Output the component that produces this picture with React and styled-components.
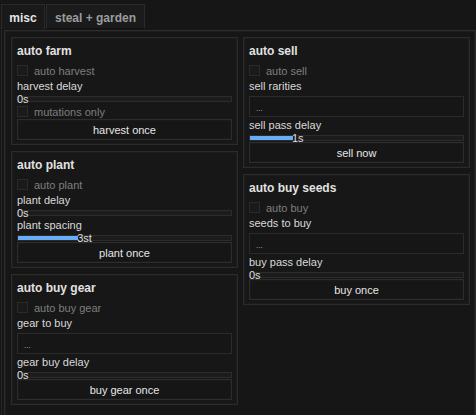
import React from 'react'
import styled, { createGlobalStyle } from 'styled-components'

const GlobalStyle = createGlobalStyle`
    html, body {
        margin: 0;
        padding: 0;
        background: #161616;
        overflow: hidden;
    }
    body {
        font-family: 'Liberation Sans', Arial, sans-serif;
        font-size: 11px;
        color: #dcdcdc;
    }
`

const Window = styled.div`
    margin: 4px 0 0 1px;
    height: 420px;
    border-left: 1px solid #262626;
`

const TabRow = styled.div`
    display: flex;
    gap: 1px;
    height: 25px;
    margin-left: -1px;
`

const Tab = styled.div`
    box-sizing: border-box;
    width: ${p => p.$width}px;
    height: 25px;
    padding-top: 6px;
    text-align: center;
    font-size: 12px;
    line-height: 14px;
    font-weight: bold;
    color: ${p => (p.$active ? '#e4e4e4' : '#9c9c9c')};
    background: ${p => (p.$active ? '#191919' : '#1b1b1b')};
    border: 1px solid #2a2a2a;
    border-bottom: ${p => (p.$active ? 'none' : '1px solid #0f0f0f')};
`

const Frame = styled.div`
    margin: 1px 0 0 2px;
    width: 472px;
    height: 400px;
    box-sizing: border-box;
    border: 1px solid #2c2c2c;
    box-shadow: inset 0 0 0 1px #1d1d1d;
    padding: 6px 5px 0 6px;
`

const Columns = styled.div`
    display: grid;
    grid-template-columns: 1fr 1fr;
    gap: 5px;
    align-items: start;
`

const Column = styled.div`
    display: flex;
    flex-direction: column;
    gap: 6px;
`

const Panel = styled.section`
    display: flex;
    flex-direction: column;
    padding: 6px 5px 4px;
    background: #171717;
    border: 1px solid #2b2b2b;
    box-shadow: inset 0 0 0 1px #1c1c1c;
`

const PanelTitle = styled.div`
    font-size: 12px;
    line-height: 14px;
    font-weight: bold;
    color: #e2e2e2;
    margin-bottom: 4px;
`

const ToggleRow = styled.div`
    display: flex;
    align-items: center;
    height: 16px;
`

const Box = styled.span`
    box-sizing: border-box;
    width: 11px;
    height: 11px;
    margin-right: 6px;
    background: #1a1a1a;
    border: 1px solid #2a2a2a;
`

const ToggleText = styled.span`
    color: #7e7e7e;
    line-height: 16px;
    padding-top: 2px;
`

const FieldLabel = styled.div`
    margin-top: 1px;
    line-height: 14px;
    color: #dadada;
`

const Slider = styled.div`
    position: relative;
    height: 10px;
`

const Track = styled.div`
    box-sizing: border-box;
    margin-top: 3px;
    height: 6px;
    background: #1c1c1c;
    border: 1px solid #2c2c2c;
`

const Fill = styled.div`
    height: 100%;
    background: #68aef6;
`

const SliderValue = styled.span`
    position: absolute;
    top: 1px;
    line-height: 11px;
    color: #dedede;
`

const Dropdown = styled.div`
    box-sizing: border-box;
    display: flex;
    align-items: center;
    margin-top: 3px;
    height: 21px;
    padding: 4px 0 0 6px;
    font-size: 8px;
    color: #bcbcbc;
    background: #161616;
    border: 1px solid #2b2b2b;
`

const ActionButton = styled.button`
    position: relative;
    box-sizing: border-box;
    height: 21px;
    padding: 1px 0 0;
    font-family: inherit;
    font-size: 11px;
    color: #e6e6e6;
    background: #161616;
    border: 1px solid #2d2d2d;
    box-shadow: inset 0 0 0 1px #1a1a1a;
`

const panels = {
    left: [
        {
            title: 'auto farm',
            items: [
                { type: 'toggle', text: 'auto harvest' },
                { type: 'label', text: 'harvest delay' },
                { type: 'slider', value: 0, text: '0s' },
                { type: 'toggle', text: 'mutations only' },
                { type: 'button', text: 'harvest once' },
            ],
        },
        {
            title: 'auto plant',
            items: [
                { type: 'toggle', text: 'auto plant' },
                { type: 'label', text: 'plant delay' },
                { type: 'slider', value: 0, text: '0s' },
                { type: 'label', text: 'plant spacing' },
                { type: 'slider', value: 28, text: '3st' },
                { type: 'button', text: 'plant once' },
            ],
        },
        {
            title: 'auto buy gear',
            items: [
                { type: 'toggle', text: 'auto buy gear' },
                { type: 'label', text: 'gear to buy' },
                { type: 'dropdown' },
                { type: 'label', text: 'gear buy delay' },
                { type: 'slider', value: 0, text: '0s' },
                { type: 'button', text: 'buy gear once' },
            ],
        },
    ],
    right: [
        {
            title: 'auto sell',
            items: [
                { type: 'toggle', text: 'auto sell' },
                { type: 'label', text: 'sell rarities' },
                { type: 'dropdown' },
                { type: 'label', text: 'sell pass delay' },
                { type: 'slider', value: 20, text: '1s' },
                { type: 'button', text: 'sell now' },
            ],
        },
        {
            title: 'auto buy seeds',
            items: [
                { type: 'toggle', text: 'auto buy' },
                { type: 'label', text: 'seeds to buy' },
                { type: 'dropdown' },
                { type: 'label', text: 'buy pass delay' },
                { type: 'slider', value: 0, text: '0s' },
                { type: 'button', text: 'buy once' },
            ],
        },
    ],
}

const renderItem = (item, i) => {
    switch (item.type) {
        case 'toggle':
            return (
                <ToggleRow key={i}>
                    <Box />
                    <ToggleText>{item.text}</ToggleText>
                </ToggleRow>
            )
        case 'label':
            return <FieldLabel key={i}>{item.text}</FieldLabel>
        case 'slider':
            return (
                <Slider key={i}>
                    <Track>
                        <Fill style={{ width: `${item.value}%` }} />
                    </Track>
                    <SliderValue style={{ left: `${item.value}%` }}>
                        {item.text}
                    </SliderValue>
                </Slider>
            )
        case 'dropdown':
            return <Dropdown key={i}>...</Dropdown>
        default:
            return <ActionButton key={i}>{item.text}</ActionButton>
    }
}

const renderPanel = panel => (
    <Panel key={panel.title}>
        <PanelTitle>{panel.title}</PanelTitle>
        {panel.items.map(renderItem)}
    </Panel>
)

export default function App() {
    return (
        <>
            <GlobalStyle />
            <Window>
                <TabRow>
                    <Tab $active $width={44}>misc</Tab>
                    <Tab $width={99}>steal + garden</Tab>
                </TabRow>
                <Frame>
                    <Columns>
                        <Column>{panels.left.map(renderPanel)}</Column>
                        <Column>{panels.right.map(renderPanel)}</Column>
                    </Columns>
                </Frame>
            </Window>
        </>
    )
}
